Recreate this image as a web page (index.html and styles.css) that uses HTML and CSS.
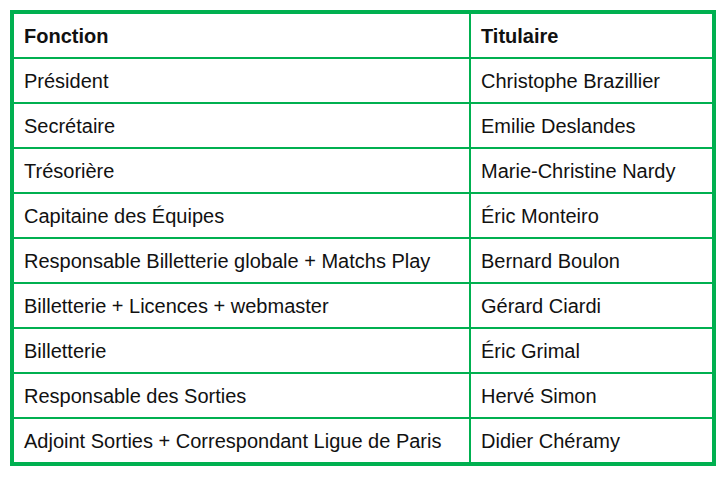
FILE: index.html
```html
<!DOCTYPE html>
<html lang="fr">
<head>
<meta charset="utf-8">
<link rel="stylesheet" href="styles.css">
</head>
<body>
<div class="table">
  <div class="cell head">Fonction</div><div class="cell head">Titulaire</div>
  <div class="cell">Président</div><div class="cell">Christophe Brazillier</div>
  <div class="cell">Secrétaire</div><div class="cell">Emilie Deslandes</div>
  <div class="cell">Trésorière</div><div class="cell">Marie-Christine Nardy</div>
  <div class="cell">Capitaine des Équipes</div><div class="cell">Éric Monteiro</div>
  <div class="cell">Responsable Billetterie globale + Matchs Play</div><div class="cell">Bernard Boulon</div>
  <div class="cell">Billetterie + Licences + webmaster</div><div class="cell">Gérard Ciardi</div>
  <div class="cell">Billetterie</div><div class="cell">Éric Grimal</div>
  <div class="cell">Responsable des Sorties</div><div class="cell">Hervé Simon</div>
  <div class="cell">Adjoint Sorties + Correspondant Ligue de Paris</div><div class="cell">Didier Chéramy</div>
</div>
</body>
</html>
```
FILE: styles.css
```css
html, body {
  margin: 0;
  padding: 0;
  background: #fff;
}
body {
  padding: 10px;
  font-family: "Liberation Sans", Arial, sans-serif;
  font-size: 20px;
  color: #111;
}
.table {
  display: grid;
  grid-template-columns: 455px 241px;
  grid-auto-rows: 43px;
  gap: 2px;
  width: 698px;
  border: 4px solid #00b050;
  background: #00b050;
}
.cell {
  background: #fff;
  display: flex;
  align-items: center;
  padding: 2px 10px 0;
  white-space: nowrap;
}
.head {
  font-weight: bold;
}
```
